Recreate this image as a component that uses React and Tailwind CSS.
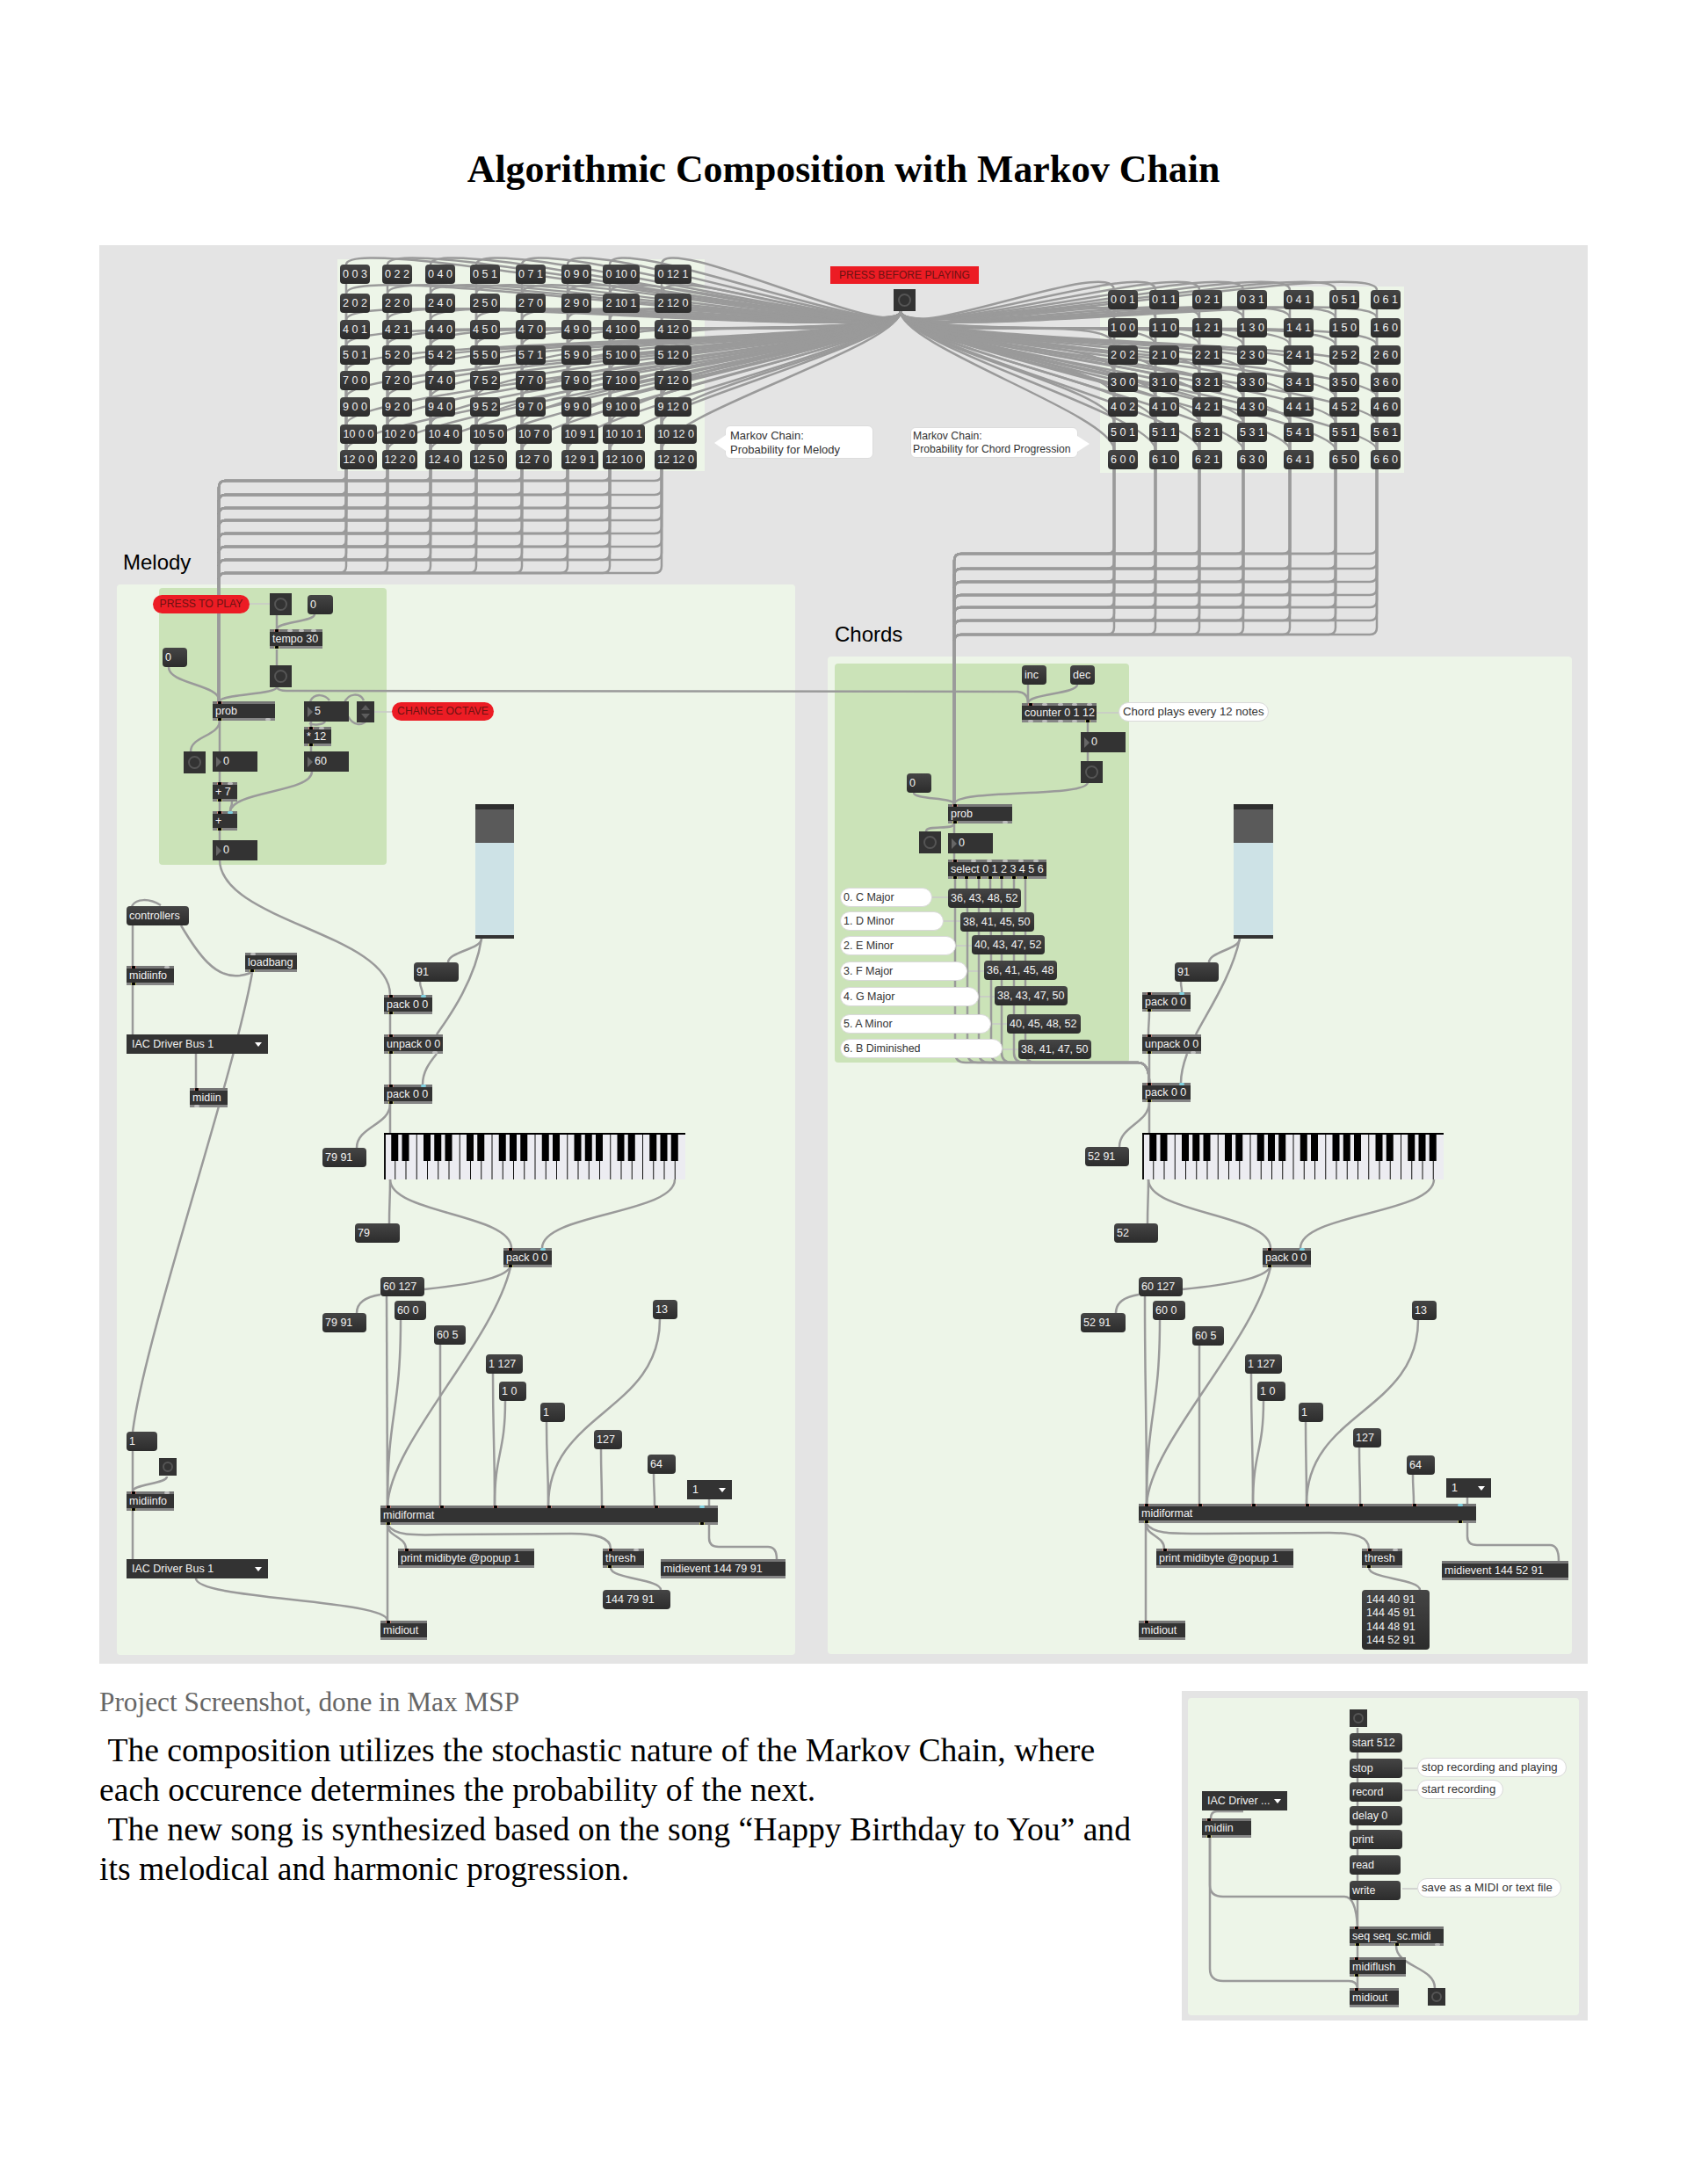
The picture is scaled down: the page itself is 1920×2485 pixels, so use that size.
import { Fragment } from 'react';

const sans = "font-['Liberation_Sans',Arial,sans-serif]";

// Cord from an outlet to an inlet, same S shape Max draws
const c = (x1, y1, x2, y2, k) => {
  const q = k ?? Math.max(8, Math.abs(y2 - y1) * 0.5);
  return `M${x1} ${y1}C${x1} ${y1 + q} ${x2} ${y2 - q} ${x2} ${y2}`;
};
// Segmented cord: down a column, along a bus line to the left, down into the target
const bus = (x, y0, line, left, end) =>
  `M${x} ${y0}V${line - 8}Q${x} ${line} ${x - 8} ${line}H${left + 8}Q${left} ${line} ${left} ${line + 8}V${end}`;

const msg = (x, y, x2, t, o) => ({ k: 'msg', x, y, w: x2 - x, h: 22, t, ...o });
const obj = (x, y, x2, t, o) => ({ k: 'obj', x, y, w: x2 - x, h: 22, t, in: [8], out: [8], ...o });
const num = (x, y, x2, t) => ({ k: 'num', x, y, w: x2 - x, h: 23, t });
const bang = (x, y, s = 25) => ({ k: 'bang', x, y, w: s, h: s });
const note = (x, y, x2, t, o) => ({ k: 'note', x, y, w: x2 - x, h: 22, t, ...o });
const red = (x, y, x2, t) => ({ k: 'red', x, y, w: x2 - x, h: 21, t });
const drop = (x, y, x2, t) => ({ k: 'drop', x, y, w: x2 - x, h: 22, t });
const pack = (x, y) => obj(x, y, x + 55, 'pack 0 0', { blue: [45] });

// Melody transition table: root note, then count for each next note
const melodyKeys = [0, 2, 4, 5, 7, 9, 10, 12];
const melodyVals = [
  [3, 2, 0, 1, 1, 0, 0, 1],
  [2, 0, 0, 0, 0, 0, 1, 0],
  [1, 1, 0, 0, 0, 0, 0, 0],
  [1, 0, 2, 0, 1, 0, 0, 0],
  [0, 0, 0, 2, 0, 0, 0, 0],
  [0, 0, 0, 2, 0, 0, 0, 0],
  [0, 0, 0, 0, 0, 1, 1, 0],
  [0, 0, 0, 0, 0, 1, 0, 0],
];
const melodyCols = [387, 435, 484, 535, 587, 639, 686, 745];
const melodyRows = [301, 334, 364, 393, 422, 452, 483, 512];
const melodyLines = [547, 563, 578, 592, 607, 622, 637, 652];
const melodyWide = [34, 34, 34, 34, 34, 34, 42, 42];
const melodyWider = [42, 40, 42, 42, 41, 42, 48, 48];
const melodyWireX = [394, 441, 490, 542, 594, 646, 694, 753];

const chordVals = [
  [1, 1, 1, 1, 1, 1, 1],
  [0, 0, 1, 0, 1, 0, 0],
  [2, 0, 1, 0, 1, 2, 0],
  [0, 0, 1, 0, 1, 0, 0],
  [2, 0, 1, 0, 1, 2, 0],
  [1, 1, 1, 1, 1, 1, 1],
  [0, 0, 1, 0, 1, 0, 0],
];
const chordCols = [1261, 1308, 1357, 1408, 1461, 1513, 1560];
const chordRows = [330, 362, 393, 424, 452, 481, 512];
const chordLines = [630, 647, 662, 677, 691, 706, 722];
const chordWireX = [1268, 1315, 1365, 1415, 1468, 1520, 1567];

const gridNodes = [];
const gridWires = [];
melodyRows.forEach((y, r) => {
  melodyCols.forEach((x, i) => {
    const w = r >= 6 ? melodyWider[i] : melodyWide[i];
    gridNodes.push(msg(x, y, x + w, `${melodyKeys[r]} ${melodyKeys[i]} ${melodyVals[r][i]}`, { grid: true }));
    gridWires.push(c(1025, 354, melodyWireX[i], y, 40));
    gridWires.push(bus(melodyWireX[i], y + 20, melodyLines[r], 249, 798));
  });
});
chordRows.forEach((y, r) => {
  chordCols.forEach((x, i) => {
    gridNodes.push(msg(x, y, x + 34, `${r} ${i} ${chordVals[r][i]}`, { grid: true }));
    gridWires.push(c(1025, 354, chordWireX[i], y, 40));
    gridWires.push(bus(chordWireX[i], y + 20, chordLines[r], 1086, 915));
  });
});

const chordMsgs = [
  [1079, 1011, 1162, '36, 43, 48, 52'],
  [1093, 1038, 1177, '38, 41, 45, 50'],
  [1106, 1064, 1189, '40, 43, 47, 52'],
  [1120, 1093, 1203, '36, 41, 45, 48'],
  [1132, 1122, 1215, '38, 43, 47, 50'],
  [1146, 1154, 1230, '40, 45, 48, 52'],
  [1159, 1183, 1242, '38, 41, 47, 50'],
];
const chordNotes = [
  [1010, 1061, '0. C Major'],
  [1037, 1074, '1. D Minor'],
  [1065, 1088, '2. E Minor'],
  [1094, 1101, '3. F Major'],
  [1123, 1114, '4. G Major'],
  [1154, 1128, '5. A Minor'],
  [1182, 1141, '6. B Diminished'],
];
const selectOuts = [8, 21, 35, 48, 61, 75, 88];

const nodes = [
  ...gridNodes,
  { k: 'bubble', x: 825, y: 484, w: 169, h: 38, lines: ['Markov Chain:', 'Probability for Melody'], side: 'left' },
  { k: 'bubble', x: 1036, y: 486, w: 191, h: 35, lines: ['Markov Chain:', 'Probability for Chord Progression'], side: 'right' },
  { k: 'flag', x: 945, y: 303, w: 169, h: 20, t: 'PRESS BEFORE PLAYING' },
  bang(1017, 329),

  // melody transport
  red(174, 677, 284, 'PRESS TO PLAY'),
  bang(307, 675),
  msg(350, 677, 379, '0'),
  obj(307, 716, 367, 'tempo 30', { ghost: [23, 36, 50] }),
  msg(185, 737, 213, '0'),
  bang(307, 757),
  obj(242, 798, 313, 'prob', { ghostOut: [63] }),
  num(346, 798, 397, '5'),
  { k: 'step', x: 406, y: 798, w: 20, h: 24 },
  red(446, 799, 562, 'CHANGE OCTAVE'),
  obj(346, 827, 377, '* 12', { ghost: [20] }),
  bang(209, 855),
  num(242, 855, 293, '0'),
  num(346, 855, 397, '60'),
  obj(242, 890, 270, '+ 7', { ghost: [20] }),
  obj(242, 923, 270, '+', { blue: [20] }),
  num(242, 956, 293, '0'),
  { k: 'slider', x: 541, y: 915, w: 44, h: 153 },

  // melody midi
  msg(144, 1031, 215, 'controllers'),
  obj(144, 1099, 198, 'midiinfo', { ghost: [46] }),
  obj(279, 1084, 338, 'loadbang', { in: [], ghost: [9] }),
  drop(144, 1177, 305, 'IAC Driver Bus 1'),
  obj(216, 1238, 259, 'midiin', { out: [], ghostOut: [8] }),
  msg(471, 1095, 522, '91'),
  pack(437, 1132),
  obj(437, 1177, 504, 'unpack 0 0', { ghostOut: [58] }),
  pack(437, 1234),
  msg(367, 1306, 417, '79 91'),
  { k: 'keys', x: 437, y: 1289, w: 343, h: 53 },
  msg(404, 1392, 455, '79'),
  pack(573, 1420),
  msg(433, 1453, 483, '60 127'),
  msg(449, 1480, 485, '60 0'),
  msg(367, 1494, 417, '79 91'),
  msg(494, 1508, 530, '60 5'),
  msg(553, 1541, 595, '1 127'),
  msg(568, 1572, 599, '1 0'),
  msg(615, 1596, 643, '1'),
  msg(743, 1479, 771, '13'),
  msg(676, 1627, 708, '127'),
  msg(737, 1655, 769, '64'),
  drop(782, 1684, 833, '1'),
  obj(433, 1713, 817, 'midiformat', { in: [9, 70, 131, 192, 253, 314], blue: [366], out: [9, 366] }),
  obj(453, 1762, 608, 'print midibyte @popup 1', { in: [10], out: [] }),
  obj(686, 1762, 733, 'thresh', { in: [9], ghost: [38] }),
  obj(752, 1774, 894, 'midievent 144 79 91', { in: [], out: [] }),
  msg(686, 1809, 763, '144 79 91'),
  obj(433, 1844, 486, 'midiout', { in: [9], out: [] }),
  msg(144, 1629, 179, '1'),
  bang(181, 1659, 20),
  obj(144, 1697, 198, 'midiinfo', { ghost: [46] }),
  drop(144, 1774, 305, 'IAC Driver Bus 1'),

  // chords transport
  msg(1163, 757, 1191, 'inc'),
  msg(1218, 757, 1246, 'dec'),
  obj(1163, 800, 1248, 'counter 0 1 12', { in: [10], ghost: [26, 44, 60, 77], out: [75], ghostOut: [10, 26, 44, 60] }),
  note(1273, 799, 1444, 'Chord plays every 12 notes'),
  num(1230, 833, 1281, '0'),
  bang(1230, 866),
  msg(1032, 880, 1060, '0'),
  obj(1079, 915, 1152, 'prob', { ghostOut: [65] }),
  bang(1046, 946),
  num(1079, 948, 1130, '0'),
  obj(1079, 978, 1191, 'select 0 1 2 3 4 5 6', { ghost: [29, 47, 65, 83, 100], out: selectOuts }),
  ...chordNotes.map(([y, x2, t]) => note(956, y, x2, t, { small: true })),
  ...chordMsgs.map(([x, y, x2, t]) => msg(x, y, x2, t)),
  { k: 'slider', x: 1404, y: 915, w: 45, h: 153 },
  msg(1337, 1095, 1387, '91'),
  pack(1300, 1129),
  obj(1300, 1177, 1367, 'unpack 0 0', { ghostOut: [58] }),
  pack(1300, 1232),
  msg(1235, 1305, 1285, '52 91'),
  { k: 'keys', x: 1300, y: 1289, w: 343, h: 53 },
  msg(1268, 1392, 1318, '52'),
  pack(1437, 1420),
  msg(1296, 1453, 1346, '60 127'),
  msg(1312, 1480, 1349, '60 0'),
  msg(1230, 1494, 1281, '52 91'),
  msg(1357, 1509, 1393, '60 5'),
  msg(1417, 1541, 1459, '1 127'),
  msg(1431, 1572, 1463, '1 0'),
  msg(1478, 1596, 1506, '1'),
  msg(1607, 1480, 1635, '13'),
  msg(1540, 1625, 1572, '127'),
  msg(1601, 1656, 1633, '64'),
  drop(1646, 1682, 1697, '1'),
  obj(1296, 1711, 1680, 'midiformat', { in: [9, 70, 131, 192, 253, 314], blue: [366], out: [9, 366] }),
  obj(1316, 1762, 1472, 'print midibyte @popup 1', { in: [10], out: [] }),
  obj(1550, 1762, 1596, 'thresh', { in: [9], ghost: [38] }),
  obj(1641, 1776, 1785, 'midievent 144 52 91', { in: [], out: [] }),
  { k: 'msg', x: 1550, y: 1809, w: 77, h: 68, lines: ['144 40 91', '144 45 91', '144 48 91', '144 52 91'] },
  obj(1296, 1844, 1349, 'midiout', { in: [9], out: [] }),
];

const wires = [
  ...gridWires,
  // melody
  c(315, 700, 315, 716),
  c(358, 699, 315, 716),
  c(315, 739, 315, 757),
  c(192, 759, 250, 798),
  c(315, 782, 250, 798),
  'M315 782Q317 786 326 786L1158 787Q1170 788 1170 800',
  c(250, 820, 217, 855),
  c(250, 820, 250, 855),
  c(250, 878, 250, 890),
  c(250, 912, 250, 923),
  c(264, 912, 262, 923),
  c(355, 878, 262, 924, 24),
  c(250, 945, 250, 956),
  c(250, 978, 444, 1132, 70),
  c(354, 820, 354, 827),
  c(354, 849, 354, 855),
  'M353 798C358 788 370 790 375 797',
  'M392 800C396 788 410 788 414 797',
  'M396 815C402 826 412 826 417 820',
  'M352 823C358 826 368 824 370 821',
  'M150 1031C155 1022 170 1022 183 1030',
  c(151, 1053, 151, 1099),
  'M206 1053C225 1085 245 1114 273 1110Q285 1108 288 1105',
  'M287 1107C265 1230 165 1520 151 1629',
  c(151, 1121, 151, 1177),
  c(223, 1199, 223, 1238),
  c(548, 1068, 510, 1095, 12),
  'M548 1068C540 1120 505 1165 497 1177',
  'M497 1199C488 1210 481 1220 481 1234',
  c(478, 1117, 481, 1132),
  c(444, 1154, 444, 1177),
  c(444, 1199, 444, 1234),
  c(444, 1256, 444, 1289),
  c(444, 1256, 406, 1306, 24),
  c(444, 1342, 443, 1392),
  c(444, 1342, 582, 1420),
  c(768, 1342, 617, 1420),
  'M581 1441C575 1455 530 1462 483 1467',
  'M581 1442C560 1530 445 1640 441 1713',
  c(440, 1475, 441, 1713),
  'M433 1473C420 1475 406 1480 406 1494',
  c(456, 1502, 441, 1713),
  c(501, 1530, 501, 1713),
  c(561, 1563, 563, 1713),
  c(575, 1594, 563, 1713),
  c(622, 1618, 624, 1713),
  c(751, 1501, 624, 1713),
  c(684, 1649, 685, 1713),
  c(744, 1677, 745, 1713),
  c(807, 1706, 807, 1713),
  c(441, 1735, 441, 1844),
  c(441, 1735, 462, 1762),
  'M441 1735C450 1748 470 1747 510 1746L650 1745C680 1745 695 1750 695 1762',
  'M807 1735V1750Q807 1760 818 1760H874Q884 1760 884 1774',
  c(695, 1784, 752, 1809),
  c(223, 1796, 441, 1844),
  c(151, 1651, 151, 1697),
  c(190, 1680, 151, 1697),
  c(151, 1719, 151, 1774),

  // chords
  c(1170, 779, 1170, 800),
  c(1226, 779, 1170, 800),
  c(1238, 822, 1238, 833),
  c(1238, 855, 1238, 866),
  c(1238, 890, 1086, 915, 18),
  c(1040, 902, 1086, 915),
  c(1086, 937, 1054, 946),
  c(1086, 937, 1086, 948),
  c(1086, 970, 1086, 978),
  ...selectOuts.map((o, i) => c(1079 + o, 1000, chordMsgs[i][0] + 8, chordMsgs[i][1])),
  ...chordMsgs.map(([x, y]) => `M${x + 8} ${y + 22}V1198Q${x + 8} 1209 ${x + 20} 1209H1295Q1308 1209 1308 1232`),
  c(1411, 1068, 1376, 1095, 12),
  'M1411 1068C1402 1110 1375 1150 1361 1177',
  'M1351 1199C1347 1210 1344 1220 1344 1232',
  c(1344, 1117, 1345, 1129),
  c(1308, 1151, 1307, 1177),
  c(1308, 1199, 1308, 1232),
  c(1308, 1254, 1308, 1289),
  c(1308, 1254, 1274, 1305, 24),
  c(1307, 1342, 1306, 1392),
  c(1307, 1342, 1446, 1420),
  c(1632, 1342, 1480, 1420),
  'M1446 1441C1440 1455 1395 1462 1346 1467',
  'M1446 1442C1425 1530 1310 1640 1305 1711',
  c(1303, 1475, 1305, 1711),
  'M1296 1473C1283 1475 1270 1480 1270 1494',
  c(1320, 1502, 1305, 1711),
  c(1365, 1531, 1365, 1711),
  c(1424, 1563, 1426, 1711),
  c(1438, 1594, 1426, 1711),
  c(1486, 1618, 1487, 1711),
  c(1614, 1502, 1487, 1711),
  c(1547, 1647, 1548, 1711),
  c(1608, 1678, 1609, 1711),
  c(1670, 1704, 1670, 1711),
  c(1304, 1733, 1304, 1844),
  c(1304, 1733, 1325, 1762),
  'M1304 1733C1313 1746 1333 1745 1373 1745L1513 1744C1543 1744 1558 1749 1558 1762',
  'M1670 1733V1748Q1670 1758 1681 1758H1764Q1774 1758 1774 1776',
  c(1558, 1784, 1616, 1809),
];

// thin callout lines, paler than the cords
const threads = [
  'M284 687H307',
  'M426 810H446',
  'M1248 811H1273',
  'M1061 1021H1079',
  'M1074 1048H1093',
  'M1088 1076H1106',
  'M1101 1105H1120',
  'M1114 1134H1132',
  'M1128 1165H1146',
  'M1141 1194H1159',
];

const miniNodes = [
  bang(1536, 1945, 20),
  ...[
    [1972, 1596, 'start 512'],
    [2001, 1596, 'stop'],
    [2028, 1596, 'record'],
    [2055, 1596, 'delay 0'],
    [2082, 1596, 'print'],
    [2111, 1594, 'read'],
    [2140, 1594, 'write'],
  ].map(([y, x2, t]) => msg(1536, y, x2, t)),
  obj(1536, 2192, 1643, 'seq seq_sc.midi', { out: [9, 54], ghostOut: [100] }),
  obj(1536, 2227, 1600, 'midiflush'),
  obj(1536, 2262, 1592, 'midiout', { out: [] }),
  bang(1625, 2262, 20),
  drop(1368, 2038, 1465, 'IAC Driver ...'),
  obj(1368, 2069, 1424, 'midiin'),
  note(1613, 2000, 1783, 'stop recording and playing'),
  note(1613, 2025, 1711, 'start recording'),
  note(1613, 2137, 1777, 'save as a MIDI or text file'),
];

const miniWires = [
  'M1545 1966V2192',
  'M1377 2091V2145Q1377 2158 1392 2158H1530Q1543 2158 1545 2192',
  'M1377 2091V2240Q1377 2254 1392 2254H1535Q1544 2254 1545 2262',
  'M1415 2061H1385Q1378 2061 1378 2069',
  c(1545, 2214, 1545, 2227),
  c(1545, 2249, 1545, 2262),
  c(1589, 2214, 1633, 2262, 24),
];
const miniThreads = ['M1598 2012H1613', 'M1598 2037H1613', 'M1596 2149H1613'];

function Dots({ list = [], side, color }) {
  const pos = side === 'top' ? 'top-[-3px]' : 'bottom-[-3px]';
  return list.map((x) => (
    <span key={x} className={`absolute h-[3px] w-[6px] rounded-full ${pos} ${color}`} style={{ left: x - 3 }} />
  ));
}

function Keys({ w, h }) {
  const key = w / 28;
  const blacks = [];
  for (let i = 1; i < 28; i++) {
    if (i % 7 !== 3 && i % 7 !== 0) blacks.push(i);
  }
  return (
    <svg width={w} height={h} className="block">
      <rect width={w} height={h} fill="#ececf1" />
      {Array.from({ length: 28 }, (_, i) => (
        <rect key={i} x={i * key} y="0" width={i === 0 ? 2 : 1} height={h} fill="#111" />
      ))}
      {blacks.map((i) => (
        <rect key={i} x={i * key - 4} y="0" width="8" height="32" fill="#000" />
      ))}
      <rect width={w} height="2" fill="#000" />
    </svg>
  );
}

function Node({ n }) {
  const place = { left: n.x, top: n.y, width: n.w, height: n.h };
  const box = 'absolute text-[#f2f2f2] text-[12.5px] leading-none whitespace-nowrap';

  if (n.k === 'msg') {
    return (
      <div
        className={`${box} rounded-[4px] bg-gradient-to-b from-[#454545] to-[#2c2c2c] ${n.grid ? 'flex items-center justify-center' : 'flex flex-col justify-center px-[3px]'} ${n.lines ? 'gap-[3px] px-[5px]' : ''}`}
        style={place}
      >
        {n.lines ? n.lines.map((l) => <span key={l}>{l}</span>) : n.t}
      </div>
    );
  }
  if (n.k === 'obj') {
    return (
      <div
        className={`${box} flex items-center bg-[#333] border-y-[3px] border-t-[#767676] border-b-[#868686] px-[3px]`}
        style={place}
      >
        {n.t}
        <Dots list={n.in} side="top" color="bg-black border-x border-[#ef8f84]" />
        <Dots list={n.blue} side="top" color="bg-[#7fd0e0]" />
        <Dots list={n.ghost} side="top" color="bg-[#bdbdbd]" />
        <Dots list={n.out} side="bottom" color="bg-black border-x border-[#d7d76a]" />
        <Dots list={n.ghostOut} side="bottom" color="bg-[#bdbdbd]" />
      </div>
    );
  }
  if (n.k === 'num') {
    return (
      <div className={`${box} flex items-center gap-[2px] bg-[#333] px-[4px]`} style={place}>
        <span className="h-0 w-0 border-y-[6px] border-l-[6px] border-y-transparent border-l-[#666]" />
        {n.t}
      </div>
    );
  }
  if (n.k === 'bang') {
    return (
      <div className="absolute flex items-center justify-center bg-[#333]" style={place}>
        <div className="aspect-square w-[62%] rounded-full border-2 border-[#555]" />
      </div>
    );
  }
  if (n.k === 'drop') {
    return (
      <div className={`${box} flex items-center justify-between bg-[#333] pl-[6px] pr-[7px]`} style={place}>
        {n.t}
        <span className="h-0 w-0 border-x-[4px] border-t-[5px] border-x-transparent border-t-white" />
      </div>
    );
  }
  if (n.k === 'note') {
    return (
      <div
        className={`absolute flex items-center whitespace-nowrap rounded-[11px] border border-[#d9d9d9] bg-white leading-none text-[#333] ${n.small ? 'px-[3px] text-[12.5px]' : 'px-[4px] text-[13.2px]'}`}
        style={place}
      >
        {n.t}
      </div>
    );
  }
  if (n.k === 'red') {
    return (
      <div
        className="absolute flex items-center justify-center whitespace-nowrap rounded-[11px] bg-[#ec1c24] text-[12.2px] leading-none text-[#6d1212]"
        style={place}
      >
        {n.t}
      </div>
    );
  }
  if (n.k === 'flag') {
    return (
      <div
        className="absolute flex items-center justify-center whitespace-nowrap bg-[#ec1c24] text-[12.1px] leading-none text-[#6d1212]"
        style={place}
      >
        {n.t}
      </div>
    );
  }
  if (n.k === 'bubble') {
    return (
      <div
        className={`absolute flex flex-col justify-center gap-[3px] rounded-[6px] border border-[#dcdcdc] bg-white leading-none text-[#333] ${n.side === 'left' ? 'px-[5px] text-[13px]' : 'px-[2px] text-[12.2px]'}`}
        style={place}
      >
        {n.lines.map((l) => (
          <span key={l} className="whitespace-nowrap">{l}</span>
        ))}
        {n.side === 'left' ? (
          <span className="absolute left-[-13px] top-[10px] h-0 w-0 border-y-[9px] border-r-[13px] border-y-transparent border-r-white" />
        ) : (
          <span className="absolute right-[-14px] top-[9px] h-0 w-0 border-y-[9px] border-l-[14px] border-y-transparent border-l-white" />
        )}
      </div>
    );
  }
  if (n.k === 'step') {
    return (
      <div className="absolute bg-[#333]" style={place}>
        <svg width={n.w} height={n.h} className="block">
          <path d="M10 4L15 10H5Z M5 14H15L10 20Z" fill="#5c5c5c" />
        </svg>
      </div>
    );
  }
  if (n.k === 'slider') {
    return (
      <div className="absolute flex flex-col" style={place}>
        <div className="h-[6px] bg-[#2e2e2e]" />
        <div className="h-[38px] bg-[#5a5a5a]" />
        <div className="flex-1 bg-[#cde2e6]" />
        <div className="h-[4px] bg-[#333]" />
      </div>
    );
  }
  if (n.k === 'keys') {
    return (
      <div className="absolute" style={place}>
        <Keys w={n.w} h={n.h} />
      </div>
    );
  }
  return null;
}

function Cords({ ox, oy, w, h, wires, threads }) {
  return (
    <svg className="absolute left-0 top-0" width={w} height={h} viewBox={`${ox} ${oy} ${w} ${h}`} fill="none">
      {threads.map((d) => (
        <path key={d} d={d} stroke="#c9c9c9" strokeWidth="1.5" />
      ))}
      {wires.map((d, i) => (
        <path key={i} d={d} stroke="#9a9a9a" strokeWidth="2.5" />
      ))}
    </svg>
  );
}

// Max patcher: nodes keep their page coordinates, the origin is taken off here
function Nodes({ list, ox, oy }) {
  return list.map((n, i) => (
    <Fragment key={i}>
      <Node n={{ ...n, x: n.x - ox, y: n.y - oy }} />
    </Fragment>
  ));
}

export default function App() {
  return (
    <div className="flex h-[2485px] w-[1920px] flex-col bg-white font-['Liberation_Serif',serif] text-black">
      <h1 className="h-[279px] pt-[164px] text-center text-[43.8px] font-bold leading-[56px]">
        Algorithmic Composition with Markov Chain
      </h1>

      <div className={`relative mx-[113px] h-[1614px] bg-[#e4e4e4] ${sans}`}>
        <div className="absolute left-[271px] top-[16px] h-[241px] w-[418px] bg-[#edf5e8]" />
        <div className="absolute left-[1139px] top-[47px] h-[212px] w-[346px] bg-[#edf5e8]" />
        <p className="absolute left-[27px] top-[347px] text-[24px] leading-[28px]">Melody</p>
        <p className="absolute left-[837px] top-[429px] text-[24px] leading-[28px]">Chords</p>

        <div className="absolute left-[20px] top-[386px] h-[1218px] w-[772px] rounded-[4px] bg-[#edf5e8] pl-[48px] pt-[4px]">
          <div className="h-[315px] w-[259px] rounded-[4px] bg-[#cbe3b8]" />
        </div>
        <div className="absolute left-[829px] top-[468px] h-[1135px] w-[847px] rounded-[4px] bg-[#edf5e8] pl-[8px] pt-[8px]">
          <div className="h-[454px] w-[335px] rounded-[4px] bg-[#cbe3b8]" />
        </div>

        <Cords ox={113} oy={279} w={1694} h={1614} wires={wires} threads={threads} />
        <Nodes list={nodes} ox={113} oy={279} />
      </div>

      <div className="flex justify-between px-[113px]">
        <div className="w-[1200px]">
          <p className="mt-[28px] text-[31.3px] leading-[32px] text-[#666]">Project Screenshot, done in Max MSP</p>
          <p className="mt-[16px] text-[37.65px] leading-[45px]">
            &nbsp;The composition utilizes the stochastic nature of the Markov Chain, where
            <br />
            each occurence determines the probability of the next.
            <br />
            &nbsp;The new song is synthesized based on the song “Happy Birthday to You” and
            <br />
            its melodical and harmonic progression.
          </p>
        </div>
        <div className={`mt-[31px] h-[375px] w-[462px] bg-[#e4e4e4] px-[7px] pt-[8px] ${sans}`}>
          <div className="relative h-[361px] w-[445px] rounded-[4px] bg-[#edf5e8]">
            <Cords ox={1352} oy={1932} w={445} h={361} wires={miniWires} threads={miniThreads} />
            <Nodes list={miniNodes} ox={1352} oy={1932} />
          </div>
        </div>
      </div>
    </div>
  );
}
